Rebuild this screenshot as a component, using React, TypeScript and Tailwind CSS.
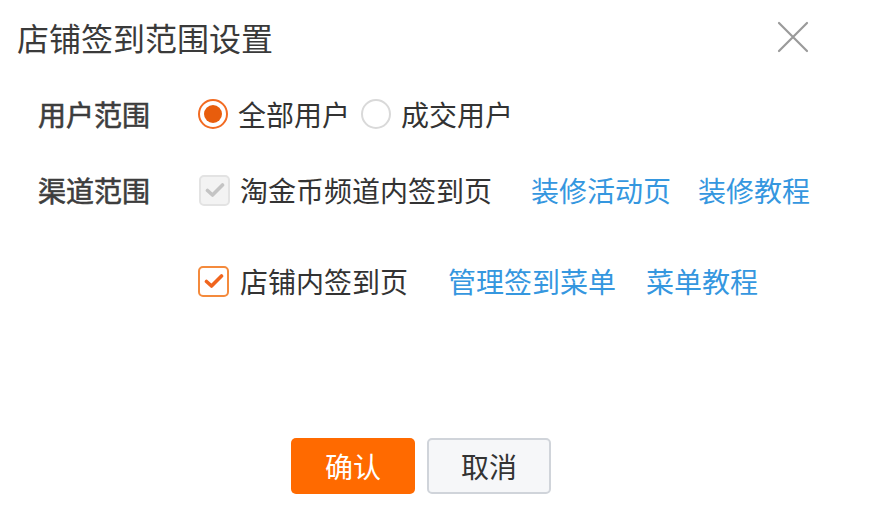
const font = { fontFamily: '"Noto Sans CJK SC", "Noto Sans", sans-serif' };

const Radio = ({ checked }: { checked?: boolean }) => (
  <span
    className={
      "flex h-[30px] w-[30px] shrink-0 items-center justify-center rounded-full border-2 bg-white " +
      (checked ? "border-[#f26b22]" : "border-[#d9d9d9]")
    }
  >
    {checked && <span className="h-[18px] w-[18px] rounded-full bg-[#e85d0c]" />}
  </span>
);

const Check = ({ disabled }: { disabled?: boolean }) => (
  <span
    className={
      "flex h-[31px] w-[31px] shrink-0 items-center justify-center rounded-[5px] border-2 " +
      (disabled ? "border-[#e3e3e3] bg-[#f3f3f3]" : "border-[#f48a3c] bg-white")
    }
  >
    <svg width="20" height="16" viewBox="0 0 20 16" fill="none">
      <path
        d="M2.5 8.5 L7.5 13 L17.5 3"
        stroke={disabled ? "#c4c4c4" : "#f0651e"}
        strokeWidth="3.6"
        strokeLinecap="round"
        strokeLinejoin="round"
      />
    </svg>
  </span>
);

export default function App() {
  return (
    <div className="h-[518px] w-[875px] overflow-hidden bg-white text-[#333]" style={font}>
      <div className="flex items-center justify-between pl-[17px] pr-[66px] pt-[17px]">
        <h1 className="text-[32px] leading-[40px] text-[#3a3a3a]">店铺签到范围设置</h1>
        <svg width="32" height="32" viewBox="0 0 32 32">
          <path d="M2 2 L30 30 M30 2 L2 30" stroke="#9a9a9a" strokeWidth="2.2" strokeLinecap="round" />
        </svg>
      </div>

      <div className="mt-[37px] flex h-10 items-center pl-[38px] text-[28px]">
        <span className="w-[160px] text-[#3d3d3d] [-webkit-text-stroke:0.6px_#3d3d3d]">用户范围</span>
        <Radio checked />
        <span className="ml-[10px]">全部用户</span>
        <span className="ml-[11px]">
          <Radio />
        </span>
        <span className="ml-[10px]">成交用户</span>
      </div>

      <div className="mt-[36px] flex h-10 items-center pl-[38px] text-[28px]">
        <span className="w-[161px] text-[#3d3d3d] [-webkit-text-stroke:0.6px_#3d3d3d]">渠道范围</span>
        <Check disabled />
        <span className="ml-[10px]">淘金币频道内签到页</span>
        <a className="ml-[39px] text-[#3597df]">装修活动页</a>
        <a className="ml-[27px] text-[#3597df]">装修教程</a>
      </div>

      <div className="mt-[51px] flex h-10 items-center pl-[198px] text-[28px]">
        <Check />
        <span className="ml-[11px]">店铺内签到页</span>
        <a className="ml-[40px] text-[#3597df]">管理签到菜单</a>
        <a className="ml-[30px] text-[#3597df]">菜单教程</a>
      </div>

      <div className="mt-[137px] flex items-center gap-[12px] pl-[291px] text-[28px]">
        <button className="h-[56px] w-[124px] rounded-[5px] bg-[#ff6a00] text-white">确认</button>
        <button className="h-[56px] w-[124px] rounded-[5px] border-2 border-[#d0d4da] bg-[#f6f7f9] text-[#333]">
          取消
        </button>
      </div>
    </div>
  );
}
